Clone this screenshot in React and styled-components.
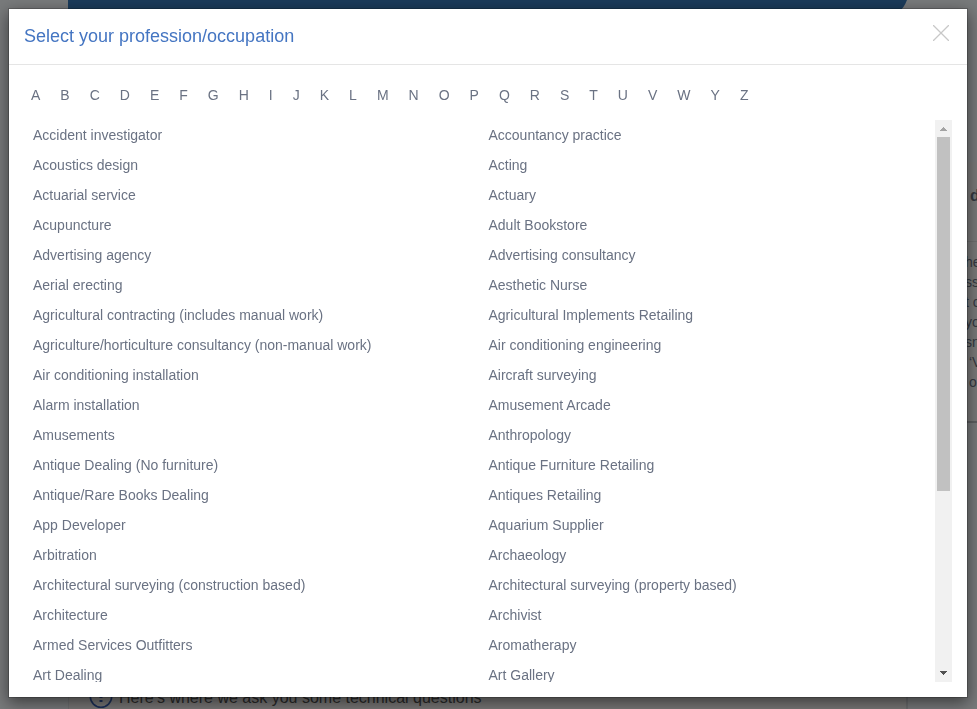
import React, { useRef } from "react";
import styled, { createGlobalStyle } from "styled-components";

const theme = {
  blue: "#4475c2",
  slate: "#6a7283",
  line: "#e5e5e5",
  navy: "#3676b4"
};

const letters = "ABCDEFGHIJKLMNOPQRSTUVWYZ".split("");

const professions = [
  "Accident investigator",
  "Accountancy practice",
  "Acoustics design",
  "Acting",
  "Actuarial service",
  "Actuary",
  "Acupuncture",
  "Adult Bookstore",
  "Advertising agency",
  "Advertising consultancy",
  "Aerial erecting",
  "Aesthetic Nurse",
  "Agricultural contracting (includes manual work)",
  "Agricultural Implements Retailing",
  "Agriculture/horticulture consultancy (non-manual work)",
  "Air conditioning engineering",
  "Air conditioning installation",
  "Aircraft surveying",
  "Alarm installation",
  "Amusement Arcade",
  "Amusements",
  "Anthropology",
  "Antique Dealing (No furniture)",
  "Antique Furniture Retailing",
  "Antique/Rare Books Dealing",
  "Antiques Retailing",
  "App Developer",
  "Aquarium Supplier",
  "Arbitration",
  "Archaeology",
  "Architectural surveying (construction based)",
  "Architectural surveying (property based)",
  "Architecture",
  "Archivist",
  "Armed Services Outfitters",
  "Aromatherapy",
  "Art Dealing",
  "Art Gallery"
];

const asideLines = ["he", "ss", "t c", "yo", "sn", " ‘V", " o"];

const App = () => {
  const list = useRef(null);
  const scroll = top => list.current.scrollBy({ top });

  return (
    <>
      <GlobalStyle />
      <Page>
        <Main>
          <Banner viewBox="0 0 840 60" preserveAspectRatio="xMaxYMin slice">
            <path d="M0 0H839Q836 8 830 13L800 60H0Z" fill={theme.navy} />
          </Banner>
          <Hint>
            <svg width="24" height="23" viewBox="0 0 24 23" fill="none">
              <circle cx="12" cy="11.5" r="10.7" stroke="#3b62b5" strokeWidth="1.6" />
              <path d="M12 5V13M12 15V17" stroke="#3b62b5" strokeWidth="3" />
            </svg>
            Here’s where we ask you some technical questions
          </Hint>
        </Main>
        <Aside>
          <AsideTitle>d</AsideTitle>
          {asideLines.map(line => (
            <AsideLine key={line}>{line}</AsideLine>
          ))}
        </Aside>
      </Page>
      <Backdrop>
        <Dialog role="dialog" aria-modal="true" aria-labelledby="title">
          <Header>
            <Title id="title">Select your profession/occupation</Title>
            <Close type="button" aria-label="Close">
              <svg width="16" height="16" viewBox="0 0 16 16">
                <path
                  d="M0 0L16 16M16 0L0 16"
                  stroke="#c8c8c8"
                  strokeWidth="1.3"
                />
              </svg>
            </Close>
          </Header>
          <Letters>
            {letters.map(letter => (
              <Letter key={letter} href={`#${letter}`}>
                {letter}
              </Letter>
            ))}
          </Letters>
          <Body>
            <List ref={list}>
              {professions.map(name => (
                <li key={name}>
                  <Profession href="#A">{name}</Profession>
                </li>
              ))}
            </List>
            <ScrollBar>
              <Arrow
                type="button"
                aria-label="Scroll up"
                color="#a3a3a3"
                onClick={() => scroll(-30)}
              >
                <svg width="7" height="5" viewBox="0 0 7 5">
                  <path
                    d="M3 1H4V2H5V3H6V4H7V5H0V4H1V3H2V2H3Z"
                    fill="currentColor"
                  />
                </svg>
              </Arrow>
              <Track>
                <Thumb />
              </Track>
              <Arrow
                type="button"
                aria-label="Scroll down"
                color="#505050"
                onClick={() => scroll(30)}
              >
                <svg width="7" height="5" viewBox="0 0 7 5">
                  <path
                    d="M0 0H7V1H6V2H5V3H4V4H3V3H2V2H1V1H0Z"
                    fill="currentColor"
                  />
                </svg>
              </Arrow>
            </ScrollBar>
          </Body>
        </Dialog>
      </Backdrop>
    </>
  );
};

const GlobalStyle = createGlobalStyle`
  * {
    box-sizing: border-box;
  }
  body {
    margin: 0;
    overflow: hidden;
    font-family: "Liberation Sans", Arial, sans-serif;
    font-size: 14px;
    color: ${theme.slate};
  }
`;
const Page = styled.div`
  display: flex;
  gap: 32px;
  height: 100vh;
  padding-left: 68px;
  overflow: hidden;
  background: #f1f4f7;
`;
const Main = styled.main`
  flex: 1;
  display: flex;
  flex-direction: column;
  justify-content: space-between;
`;
const Banner = styled.svg`
  width: 100%;
  height: 60px;
`;
const Hint = styled.div`
  display: flex;
  align-items: flex-start;
  gap: 6px;
  height: 24px;
  padding-left: 20px;
  font-size: 16px;
  line-height: 26px;
  color: #555;
  background: #f4f1f0;
  border-right: 2px solid #d8dade;
  border-left: 1px solid #dfe2e6;
  white-space: nowrap;
`;
const Aside = styled.aside`
  width: 37px;
  height: 261px;
  margin-top: 162px;
  padding-left: 25px;
  overflow: hidden;
  background: #f4f3f3;
  border-bottom: 2px solid #bcbec2;
`;
const AsideTitle = styled.div`
  height: 80px;
  margin-bottom: 10px;
  padding-left: 5px;
  border-bottom: 1px solid #ddd;
  font-weight: bold;
  font-size: 16px;
  line-height: 68px;
`;
const AsideLine = styled.div`
  line-height: 20px;
  white-space: pre;
`;
// covers the page and keeps the dialog inside the window
const Backdrop = styled.div`
  position: fixed;
  inset: 0;
  display: flex;
  padding: 8px 9px 11px 8px;
  background: rgba(0, 0, 0, 0.5);
`;
const Dialog = styled.section`
  flex: 1;
  display: flex;
  flex-direction: column;
  min-width: 0;
  background: white;
  background-clip: padding-box;
  border: 1px solid rgba(0, 0, 0, 0.2);
  box-shadow: 0 5px 15px rgba(0, 0, 0, 0.5);
`;
const Header = styled.header`
  display: flex;
  justify-content: space-between;
  align-items: flex-start;
  padding: 15px;
  border-bottom: 1px solid ${theme.line};
`;
const Title = styled.h1`
  margin: 0;
  font-weight: normal;
  font-size: 18px;
  line-height: 25px;
  color: ${theme.blue};
`;
const Close = styled.button`
  display: flex;
  padding: 1px 3px;
  border: 0;
  background: none;
  cursor: pointer;
`;
const Letters = styled.nav`
  display: flex;
  flex-wrap: wrap;
  gap: 0 20px;
  padding: 20px 22px 15px;
`;
const Letter = styled.a`
  line-height: 20px;
  color: inherit;
  text-decoration: none;
`;
const Body = styled.div`
  flex: 1;
  display: flex;
  min-height: 0;
  padding: 0 15px 15px;
`;
const List = styled.ul`
  flex: 1;
  display: grid;
  grid-template-columns: 1fr 1fr;
  grid-auto-rows: 30px;
  margin: 0;
  padding: 0;
  overflow-y: auto;
  scrollbar-width: none;
  list-style: none;
`;
const Profession = styled.a`
  display: block;
  padding: 0 9px;
  line-height: 30px;
  color: inherit;
  text-decoration: none;
  white-space: nowrap;
`;
const ScrollBar = styled.div`
  display: flex;
  flex-direction: column;
  width: 17px;
  background: #f1f1f1;
`;
const Arrow = styled.button`
  display: flex;
  align-items: center;
  justify-content: center;
  height: 17px;
  padding: 0;
  border: 0;
  background: none;
  color: ${props => props.color};
`;
const Track = styled.div`
  flex: 1;
  padding: 0 2px;
`;
const Thumb = styled.div`
  height: 67%;
  background: #c1c1c1;
`;

export default App;
